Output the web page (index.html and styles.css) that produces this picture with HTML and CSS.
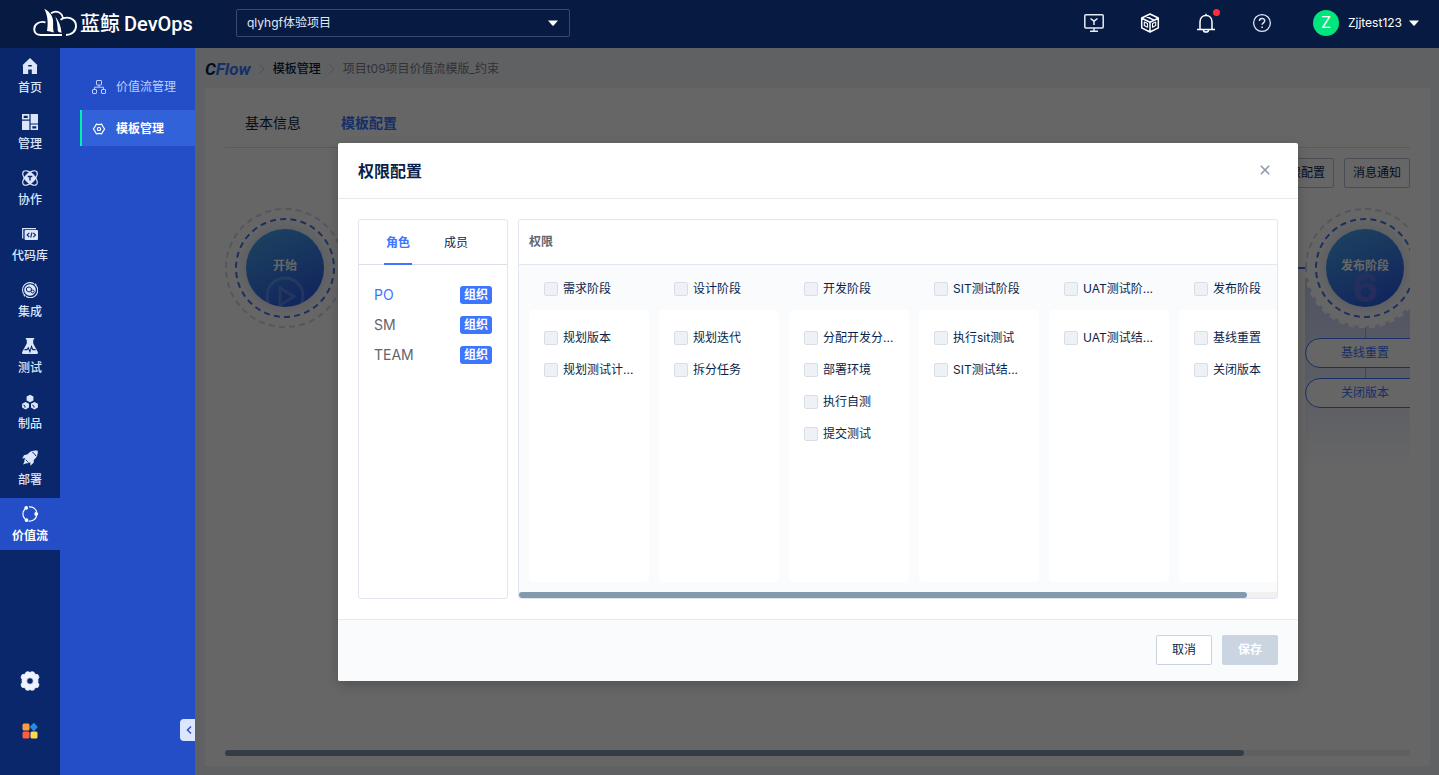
FILE: index.html
```html
<!DOCTYPE html>
<html lang="zh-CN">
<head>
<meta charset="utf-8">
<title>蓝鲸DevOps</title>
<link rel="stylesheet" href="styles.css">
</head>
<body>
<header class="topbar">
  <a class="brand" href="#">
    <svg class="brand-mark" width="46" height="30" viewBox="0 0 46 30" fill="none" stroke="#fff" stroke-width="1.900">
      <path d="M13.500 14.300C7.500 12.800 2.200 16.200 2.200 21.200c0 3.600 2.800 5.800 6.800 5.800H30"/>
      <path d="M12.300.8c4.500 2.500 8 6.200 8.700 11.200.4 4-.4 7.800.8 12.600-2.800-.9-4.800-1.500-6.800-1.600C16.300 16 16 8 12.300.8Z" fill="#fff" stroke="none"/>
      <path d="M23.300 8.500c3.500 4.300 5.700 9.500 6.200 16.300-1.600-.2-2.900-.8-3.700-1.800-.2-5-.7-10-2.500-14.500Z" fill="#fff" stroke="none"/>
      <path stroke-width="1.700" d="M19 5.300C24 1.800 30.500 4 31 11"/>
      <path d="M28.500 11.700c7-4.700 15.500-.7 15.500 6.300 0 5.500-4.500 9-10 9"/>
    </svg>
    <span class="brand-name"><span>蓝鲸</span><span>DevOps</span></span>
  </a>
  <div class="project">
    <select class="project-select" aria-label="项目"><option>qlyhgf体验项目</option></select>
    <svg class="caret project-caret" width="10" height="6" viewBox="0 0 10 6"><path d="M0 .5h10L5.600 5.600q-.6.5-1.200 0Z" fill="#fff"/></svg>
  </div>
  <div class="tools">
    <button class="tool" aria-label="控制台">
      <svg width="20" height="20" viewBox="0 0 20 20" fill="none" stroke="#e6ecf7" stroke-width="1.500"><rect x=".8" y="1.800" width="18.400" height="13.200" rx="1"/><path d="M10 15v3M6 18.300h8M6.500 5.500 10 8.200l3.500-2.700M10 8v4"/></svg>
    </button>
    <button class="tool" aria-label="服务">
      <svg width="20" height="20" viewBox="0 0 20 20" fill="none" stroke="#fff" stroke-width="1.500" stroke-linejoin="round"><path d="m10 1 8.300 4v9.800L10 19l-8.300-4.200V5ZM1.700 5.200 10 9.200l8.300-4M10 9.200V19M5.800 3.200l8.200 3.900"/><path stroke-width="1.100" d="m4.300 9 3.200 1.600v3.600l-3.200-1.600ZM15.700 9l-3.200 1.600v3.600l3.200-1.600Z"/></svg>
    </button>
    <button class="tool" aria-label="消息">
      <svg width="20" height="20" viewBox="0 0 20 20" fill="none" stroke="#fff" stroke-width="1.500"><path d="M1 16.500h18M4 16.200V9c0-4 2.500-6.600 6-6.600S16 5 16 9v7.200M10 .8v1.600M7.300 16.800c.5 3 4.900 3 5.400 0"/></svg>
      <span class="dot"></span>
    </button>
    <button class="tool" aria-label="帮助">
      <svg width="20" height="20" viewBox="0 0 20 20" fill="none" stroke="#dfe6f3" stroke-width="1.300"><circle cx="10" cy="10" r="8.400"/><path stroke-width="1.500" d="M7.400 8c0-3.500 5.300-3.400 5.300-.2 0 2-2.600 2-2.600 4M10.100 13.400V15"/></svg>
    </button>
    <button class="user">
      <span class="avatar">Z</span><span class="user-name">Zjjtest123</span>
      <svg class="caret" width="10" height="6" viewBox="0 0 10 6"><path d="M0 .5h10L5.600 5.600q-.6.5-1.200 0Z" fill="#fff"/></svg>
    </button>
  </div>
</header>

<div class="shell">
  <nav class="rail">
    <a class="rail-item" href="#"><svg width="16" height="16" viewBox="0 0 16 16" fill="currentColor"><path fill-rule="evenodd" d="M8 0 15.800 7.500H15V16H9.800v-4.500H6.200V16H1V7.500H.2ZM6.200 7v1.600h3.600V7Z"/></svg><span>首页</span></a>
    <a class="rail-item" href="#"><svg width="16" height="16" viewBox="0 0 16 16" fill="currentColor"><path fill-rule="evenodd" d="M0 0h7.400v5.600H0ZM1.700 1.700V4h4V1.700ZM8.600 0H16v9.400H8.600ZM0 6.800h7.400V16H0ZM8.600 10.500H16V16H8.600ZM10.300 12.200v2.200h4v-2.200Z"/></svg><span>管理</span></a>
    <a class="rail-item" href="#"><svg width="16" height="16" viewBox="0 0 16 16" fill="none" stroke="currentColor" stroke-width="1.200"><ellipse cx="8" cy="8" rx="9.200" ry="4.500" transform="rotate(45 8 8)"/><ellipse cx="8" cy="8" rx="9.200" ry="4.500" transform="rotate(-45 8 8)"/><path fill="currentColor" d="m8 2.200 5.800 5.800L8 13.800 2.200 8Z"/><path stroke="#0a276b" stroke-width="1.400" d="M5.700 6.500h4.600M8 6.500V10.600"/></svg><span>协作</span></a>
    <a class="rail-item" href="#"><svg width="16" height="16" viewBox="0 0 16 16" fill="none"><path stroke="currentColor" stroke-width="1.200" d="M14 2.600H.7v10"/><rect x="2.600" y="4" width="13.400" height="10" rx="1" fill="currentColor"/><path stroke="#0a276b" stroke-width="1.100" d="M7.300 6.800 5.100 9l2.200 2.200M11.300 6.800 13.500 9l-2.200 2.200M10 6.500l-1.300 5"/></svg><span>代码库</span></a>
    <a class="rail-item" href="#"><svg width="16" height="16" viewBox="0 0 16 16" fill="none"><path stroke="currentColor" stroke-width="1.100" d="M2.500 13A7.400 7.400 0 0 1 12 1.800M13.500 3A7.400 7.400 0 0 1 4 14.300"/><circle cx="8" cy="8" r="5.800" fill="currentColor"/><path d="m4.500 6 2.500-1.200 2.300 1.400v2.500L7 10 4.500 8.700Z" stroke="#0a276b"/><circle cx="10.600" cy="9.500" r="1.500" stroke="#0a276b"/><circle cx="13.400" cy="2.600" r="1" fill="currentColor"/><circle cx="2.600" cy="13.400" r="1" fill="currentColor"/></svg><span>集成</span></a>
    <a class="rail-item" href="#"><svg width="16" height="16" viewBox="0 0 16 16" fill="none"><path fill="currentColor" d="M3.800 0h8.400v1.400h-1V5.500L15.800 14c.5 1.200-.2 2-1.400 2H1.600C.4 16-.3 15.200.2 14L4.800 5.500V1.400h-1Z"/><path stroke="#0a276b" stroke-width="1.100" d="M2.500 11.600H5l1.300-1.800 1.600 3.800 1.600-5 1.300 3h2.800"/></svg><span>测试</span></a>
    <a class="rail-item" href="#"><svg width="16" height="16" viewBox="0 0 16 16" fill="currentColor"><path d="m8 .7 3.400 1.900v3.800L8 8.300 4.600 6.400V2.600ZM3.600 7.900 7 9.800v3.800l-3.400 1.900L.1 13.600V9.800ZM12.400 7.900l3.500 1.900v3.800l-3.500 1.900L9 13.600V9.800Z"/><path d="M1.500 11 3 12v1.600M10.300 11l1.700 1v1.600" stroke="#0a276b" fill="none"/></svg><span>制品</span></a>
    <a class="rail-item" href="#"><svg width="16" height="16" viewBox="0 0 16 16" fill="currentColor"><path d="M15.800.8C12 .2 8.300 1 5.600 4.300L2 5.200.2 8.500l3-.4c-.7 1.500-1 2.800-.8 3.700L1 14.500l3.600-1.300c1.200.2 2.200-.1 3.600-.9l.2 3.500 3.200-3 .3-3C15 7.600 16 4.500 15.800.8Z"/><path d="M10.300 2.200c1.500.8 2.800 2.100 3.700 3.800" fill="none" stroke="#0a276b" stroke-width="1"/><path d="m3.600 9.600 3 3" stroke="#0a276b" stroke-width=".8"/></svg><span>部署</span></a>
    <a class="rail-item is-active" href="#"><svg width="16" height="16" viewBox="0 0 16 16" fill="none" stroke="currentColor" stroke-width="1.200"><path d="M7 .9A7 7 0 0 1 14.700 6M14.600 10A7 7 0 0 1 6.500 15M3 13A7 7 0 0 1 3 3"/><g fill="currentColor" stroke="none"><circle cx="4.200" cy="1.900" r="1.900"/><circle cx="14.200" cy="8" r="1.900"/><circle cx="4.500" cy="14.100" r="1.900"/></g></svg><span>价值流</span></a>
    <div class="rail-foot">
      <button class="rail-button" aria-label="设置"><svg width="20" height="20" viewBox="0 0 20 20"><path fill="#eef3ff" stroke="#eef3ff" stroke-width=".8" stroke-linejoin="round" fill-rule="evenodd" d="M6.200 1 8.500.7 10 1.600l1.500-.9 2.300.3 1.200 2.200 3 .5 1 2.600-1.100 2v3.400l1.100 2-1 2.600-3 .5-1.200 2.200-2.300.3-1.500-.9-1.500.9-2.300-.3L5 16.800l-3-.5-1-2.600 1.100-2V8.300L1 6.300l1-2.600 3-.5ZM10 6.700a3.300 3.300 0 1 0 0 6.600 3.300 3.300 0 0 0 0-6.600Z"/></svg></button>
      <button class="rail-button" aria-label="应用"><svg width="16" height="16" viewBox="0 0 16 16"><rect x=".5" y=".5" width="7" height="7" rx="1.500" fill="#ff9c3e"/><path d="m11.800.8 3 3.200-3 3.200L8.800 4Z" fill="#2b8de0" stroke="#2b8de0" stroke-linejoin="round" stroke-width="1.600"/><rect x=".5" y="8.500" width="7" height="7" rx="1.500" fill="#ff5b45"/><rect x="8.500" y="8.500" width="7" height="7" rx="1.500" fill="#ffd84d"/></svg></button>
    </div>
  </nav>

  <aside class="side">
    <a class="side-item" href="#"><svg width="14" height="14" viewBox="0 0 14 14" fill="none" stroke="currentColor"><rect x="4.500" y=".5" width="5" height="4.500" rx=".5"/><rect x=".5" y="9.500" width="4" height="4" rx=".5"/><rect x="9.500" y="9.500" width="4" height="4" rx=".5"/><path d="M7 5v2.200M2.500 9.500V7.200h9v2.300"/></svg><span>价值流管理</span></a>
    <a class="side-item is-active" href="#"><svg width="14" height="14" viewBox="0 0 14 14" fill="none" stroke="currentColor" stroke-width="1.200" stroke-linejoin="round"><path d="M4.300 2.200 7 2.700l2.700-.5L11 4.700 12.600 7 11 9.300l-1.300 2.500L7 11.300l-2.700.5L3 9.300 1.400 7 3 4.700Z"/><rect x="5.500" y="5.500" width="3" height="3" rx="1"/></svg><span>模板管理</span></a>
    <button class="fold" aria-label="收起"><svg width="8" height="10" viewBox="0 0 8 10" fill="none" stroke="#2950c8" stroke-width="1.500"><path d="M6 1.500 2.500 5 6 8.500"/></svg></button>
  </aside>

  <main class="main">
    <div class="crumbs">
      <a class="product" href="#"><span class="product-c">C</span>Flow</a>
      <svg width="6" height="10" viewBox="0 0 6 10" fill="none" stroke="#c4c6cc"><path d="m.5.5 4.500 4.500L.5 9.500"/></svg>
      <a class="crumb" href="#">模板管理</a>
      <svg width="6" height="10" viewBox="0 0 6 10" fill="none" stroke="#c4c6cc"><path d="m.5.5 4.500 4.500L.5 9.500"/></svg>
      <span class="crumb-last">项目t09项目价值流模版_约束</span>
    </div>
    <section class="card">
      <div class="page-tabs">
        <button class="page-tab">基本信息</button>
        <button class="page-tab is-active">模板配置</button>
      </div>
      <div class="actions">
        <button class="action">权限配置</button>
        <button class="action">消息通知</button>
      </div>
      <div class="flow">
        <div class="stage">
          <div class="node">
            <svg class="node-art" width="120" height="120" viewBox="0 0 120 120" fill="none">
              <defs>
                <linearGradient id="disc" x1=".2" y1="0" x2=".7" y2="1"><stop offset="0" stop-color="#48a6ef"/><stop offset="1" stop-color="#2c5ce8"/></linearGradient>
                <radialGradient id="halo"><stop offset=".75" stop-color="#e6ecf9"/><stop offset="1" stop-color="#fff"/></radialGradient>
                <clipPath id="disc-clip"><circle cx="60" cy="60" r="39"/></clipPath>
              </defs>
              <circle cx="60" cy="60" r="59" stroke="#d3d7e8" stroke-width="2" stroke-dasharray="6 4.300"/>
              <circle cx="60" cy="60" r="49" fill="url(#halo)" stroke="#4a76e8" stroke-width="2" stroke-dasharray="6 4.260"/>
              <circle cx="60" cy="60" r="39" fill="url(#disc)"/>
              <g clip-path="url(#disc-clip)" stroke="#fff" stroke-opacity=".2" stroke-width="3"><circle cx="60" cy="88" r="18"/><path d="m55 80 14 8.500L55 97Z"/></g>
            </svg>
            <span class="node-name">开始</span>
          </div>
        </div>
        <div class="link"></div>
        <div class="stage stage-filled">
          <div class="node">
            <svg class="node-art" width="120" height="120" viewBox="0 0 120 120" fill="none">
              <circle cx="60" cy="60" r="58" fill="#fff"/>
              <path d="M1 60a59 59 0 0 1 118 0" stroke="#d3d7e8" stroke-width="2" stroke-dasharray="6 4.300"/>
              <path d="M119 60a59 59 0 0 1-118 0" stroke="#fff" stroke-width="3" stroke-dasharray="6 4.300"/>
              <circle cx="60" cy="60" r="49" fill="url(#halo)" stroke="#4a76e8" stroke-width="2" stroke-dasharray="6 4.260"/>
              <circle cx="60" cy="60" r="39" fill="url(#disc)"/>
              <text class="node-number" x="60" y="94" text-anchor="middle" fill="#7a78e8" fill-opacity=".6">6</text>
            </svg>
            <span class="node-name">发布阶段</span>
          </div>
          <span class="stem"></span>
          <button class="pill">基线重置</button>
          <span class="stem"></span>
          <button class="pill">关闭版本</button>
        </div>
      </div>
      <div class="scroll page-scroll"><div class="scroll-thumb"></div></div>
    </section>

    <div class="overlay">
      <div class="modal" role="dialog" aria-labelledby="modal-title">
        <div class="modal-head">
          <h2 class="modal-title" id="modal-title">权限配置</h2>
          <button class="close" aria-label="关闭"><svg width="10" height="10" viewBox="0 0 10 10" stroke="#8798ad" stroke-width="1.500"><path d="m.8.8 8.400 8.400M9.200.8.800 9.200"/></svg></button>
        </div>
        <div class="modal-body">
          <div class="panel roles">
            <div class="role-tabs">
              <button class="role-tab is-active">角色</button>
              <button class="role-tab">成员</button>
            </div>
            <ul class="role-list">
              <li class="role is-active"><span>PO</span><span class="tag">组织</span></li>
              <li class="role"><span>SM</span><span class="tag">组织</span></li>
              <li class="role"><span>TEAM</span><span class="tag">组织</span></li>
            </ul>
          </div>
          <div class="panel perms">
            <h3 class="perms-title">权限</h3>
            <div class="perms-grid">
              <div class="perm-col">
                <label class="check check-head"><input type="checkbox" disabled>需求阶段</label>
                <div class="perm-box">
                  <label class="check"><input type="checkbox" disabled>规划版本</label>
                  <label class="check"><input type="checkbox" disabled>规划测试计...</label>
                </div>
              </div>
              <div class="perm-col">
                <label class="check check-head"><input type="checkbox" disabled>设计阶段</label>
                <div class="perm-box">
                  <label class="check"><input type="checkbox" disabled>规划迭代</label>
                  <label class="check"><input type="checkbox" disabled>拆分任务</label>
                </div>
              </div>
              <div class="perm-col">
                <label class="check check-head"><input type="checkbox" disabled>开发阶段</label>
                <div class="perm-box">
                  <label class="check"><input type="checkbox" disabled>分配开发分...</label>
                  <label class="check"><input type="checkbox" disabled>部署环境</label>
                  <label class="check"><input type="checkbox" disabled>执行自测</label>
                  <label class="check"><input type="checkbox" disabled>提交测试</label>
                </div>
              </div>
              <div class="perm-col">
                <label class="check check-head"><input type="checkbox" disabled>SIT测试阶段</label>
                <div class="perm-box">
                  <label class="check"><input type="checkbox" disabled>执行sit测试</label>
                  <label class="check"><input type="checkbox" disabled>SIT测试结...</label>
                </div>
              </div>
              <div class="perm-col">
                <label class="check check-head"><input type="checkbox" disabled>UAT测试阶...</label>
                <div class="perm-box">
                  <label class="check"><input type="checkbox" disabled>UAT测试结...</label>
                </div>
              </div>
              <div class="perm-col">
                <label class="check check-head"><input type="checkbox" disabled>发布阶段</label>
                <div class="perm-box">
                  <label class="check"><input type="checkbox" disabled>基线重置</label>
                  <label class="check"><input type="checkbox" disabled>关闭版本</label>
                </div>
              </div>
            </div>
            <div class="scroll perms-scroll"><div class="scroll-thumb"></div></div>
          </div>
        </div>
        <div class="modal-foot">
          <button class="btn">取消</button>
          <button class="btn btn-save" disabled>保存</button>
        </div>
      </div>
    </div>
  </main>
</div>
</body>
</html>
```
FILE: styles.css
```css
* { box-sizing: border-box; }

body {
  margin: 0;
  min-height: 100vh;
  display: flex;
  flex-direction: column;
  font: 12px/18px Inter, "Noto Sans CJK SC", sans-serif;
  color: #0b1f4b;
}

button, select, input { font: inherit; color: inherit; margin: 0; }
button { padding: 0; border: 0; background: none; cursor: pointer; }
a { color: inherit; text-decoration: none; }
svg { display: block; flex: none; }
h2, h3, ul { margin: 0; padding: 0; }

/* Top bar */
.topbar {
  display: flex;
  align-items: center;
  height: 48px;
  padding: 0 20px 2px 32px;
  background: #061a42;
  color: #fff;
}
.brand { display: flex; align-items: center; gap: 2px; width: 204px; }
.brand-name { display: flex; gap: 4px; padding-top: 2px; font: 500 20px/28px Roboto, "Noto Sans CJK SC", sans-serif; white-space: nowrap; }
.project { position: relative; width: 334px; }
.project-select {
  display: block;
  width: 100%;
  height: 28px;
  padding: 0 10px;
  border: 1px solid #3a4a6e;
  border-radius: 2px;
  background: transparent;
  color: #e2e8f5;
  appearance: none;
}
.project-caret { position: absolute; right: 12px; top: 11px; pointer-events: none; }
.tools { display: flex; align-items: center; gap: 36px; margin-left: auto; }
.tool { position: relative; }
.dot { position: absolute; right: -4px; top: -4px; width: 7px; height: 7px; border-radius: 50%; background: #ff2c3e; }
.user { display: flex; align-items: center; gap: 9px; margin-left: 5px; }
.user .caret { margin-left: -2px; }
.avatar { width: 26px; height: 26px; border-radius: 50%; background: #00e57c; font-size: 16px; line-height: 24px; }

/* Shell */
.shell { flex: 1; display: grid; grid-template-columns: 60px 135px minmax(0, 1fr); }

.rail { display: flex; flex-direction: column; gap: 4px; padding-top: 2px; background: #0a276b; color: #dce6fb; }
.rail-item {
  display: flex;
  flex-direction: column;
  align-items: center;
  gap: 5px;
  height: 52px;
  padding-top: 8px;
  font-weight: 500;
}
.rail-item.is-active { background: #244dc8; color: #fff; font-weight: 700; }
.rail-foot { display: flex; flex-direction: column; align-items: center; gap: 32px; margin-top: auto; padding-bottom: 36px; }

.side { position: relative; display: flex; flex-direction: column; gap: 6px; padding: 20px 0 0 20px; background: #244dc8; }
.side-item {
  display: flex;
  align-items: center;
  gap: 10px;
  height: 36px;
  padding: 1px 0 0 10px;
  border-left: 2px solid transparent;
  color: #bdd0fb;
}
.side-item.is-active { background: #3162d9; border-left-color: #00f5a8; color: #fff; font-weight: 700; }
.fold {
  position: absolute;
  right: 0;
  bottom: 34px;
  display: grid;
  place-items: center;
  width: 15px;
  height: 22px;
  padding-left: 2px;
  border-radius: 4px 0 0 4px;
  background: #dce7ff;
}

/* Page */
.main { position: relative; display: flex; flex-direction: column; padding: 0 9px 9px 10px; background: #f0f3f8; }
.crumbs { display: flex; align-items: center; gap: 8px; height: 40px; padding-top: 1px; }
.product { color: #3c76ff; font: italic 700 17px/20px Roboto, sans-serif; }
.product-c, .crumb { color: #081e40; }
.crumb { font-weight: 500; }
.crumb-last { color: #7b7d8a; }
.card { flex: 1; display: flex; flex-direction: column; padding: 0 20px 10px; background: #fff; }
.page-tabs { display: flex; gap: 40px; height: 60px; padding: 10px 20px 0; border-bottom: 1px solid #dcdee5; }
.page-tab { font-size: 14px; }
.page-tab.is-active { color: #3c76ff; font-weight: 700; }
.actions { display: flex; justify-content: flex-end; gap: 10px; padding: 10px 0 20px; }
.action { width: 66px; height: 30px; border: 1px solid #b8c0cf; border-radius: 2px; white-space: nowrap; }

.flow { flex: 1; display: flex; align-items: flex-start; overflow: hidden; }
.stage { flex: none; display: flex; flex-direction: column; align-items: center; width: 120px; }
.stage-filled {
  height: 280px;
  margin-right: -15px;
  background: linear-gradient(transparent 60px, #c3cdf2 60px, #dbe2fa 140px, #fff 262px);
}
.node { display: grid; place-items: center; }
.node > * { grid-area: 1 / 1; }
.node-name { z-index: 1; padding-bottom: 4px; color: #fff; font-weight: 700; }
.node-number { font: 700 40px Inter, sans-serif; }
.link { flex: 1; height: 2px; margin-top: 59px; background: #3c76ff; }
.stem { width: 1px; height: 10px; background: #a8b0c4; }
.pill { width: 120px; height: 30px; border: 1px solid #3c76ff; border-radius: 15px; background: #fff; color: #3c76ff; }

.scroll { height: 6px; background: #f1f1f1; }
.scroll-thumb { height: 6px; border-radius: 3px; background: #8399ad; }
.page-scroll .scroll-thumb { width: 86%; }

/* Dialog */
.overlay { position: absolute; inset: 0; z-index: 2; display: grid; place-items: center; padding-left: 2px; background: rgba(0, 0, 0, .6); }
.modal { width: 960px; max-width: 100%; border-radius: 2px; background: #fff; box-shadow: 0 4px 12px rgba(0, 0, 0, .2); overflow: hidden; }
.modal-head { display: flex; align-items: center; justify-content: space-between; height: 56px; padding: 0 28px 0 20px; border-bottom: 1px solid #e6e9f0; }
.modal-title { padding-top: 2px; font-size: 16px; line-height: 24px; font-weight: 700; }
.modal-body { display: flex; gap: 10px; padding: 20px; }
.panel { height: 380px; border: 1px solid #e1e6f0; border-radius: 3px; }
.roles { flex: none; width: 150px; }
.role-tabs { display: flex; gap: 30px; height: 45px; padding-left: 25px; border-bottom: 1px solid #dcdee8; }
.role-tab { height: 45px; width: 28px; padding-top: 3px; border-bottom: 2px solid transparent; }
.role-tab.is-active { color: #3c76ff; border-bottom-color: #3c76ff; font-weight: 700; }
.role-list { padding: 15px; list-style: none; }
.role { display: flex; align-items: center; justify-content: space-between; height: 30px; color: #63656e; font-size: 14px; }
.role.is-active { color: #3c76ff; }
.tag { padding: 0 4px; border-radius: 3px; background: #3c76ff; color: #fff; font-size: 12px; line-height: 18px; font-weight: 700; }

.perms { flex: 1; min-width: 0; display: flex; flex-direction: column; overflow: hidden; }
.perms-title { height: 45px; padding-left: 10px; border-bottom: 1px solid #e1e6f0; color: #63656e; font-size: 12px; line-height: 44px; font-weight: 700; }
.perms-grid { flex: 1; display: flex; gap: 10px; padding: 0 10px 10px; background: #fafbfd; }
.perm-col { flex: none; width: 120px; display: flex; flex-direction: column; }
.perm-box { flex: 1; padding-top: 12px; border-radius: 4px; background: #fff; }
.check { display: flex; align-items: center; gap: 5px; height: 32px; padding-left: 15px; white-space: nowrap; }
.check-head { height: 45px; padding-top: 3px; }
.check input { appearance: none; width: 14px; height: 14px; border: 1px solid #d9dde6; border-radius: 2px; background: #eef1f6; }
.perms-scroll .scroll-thumb { width: 96%; }

.modal-foot { display: flex; justify-content: flex-end; gap: 10px; padding: 15px 20px 16px; border-top: 1px solid #e6e9f0; background: #fafbfd; }
.btn { width: 56px; height: 30px; border: 1px solid #c9d3e2; border-radius: 2px; background: #fff; }
.btn-save { border-color: #cbd5e1; background: #cbd5e1; color: #fff; font-weight: 700; }
```
